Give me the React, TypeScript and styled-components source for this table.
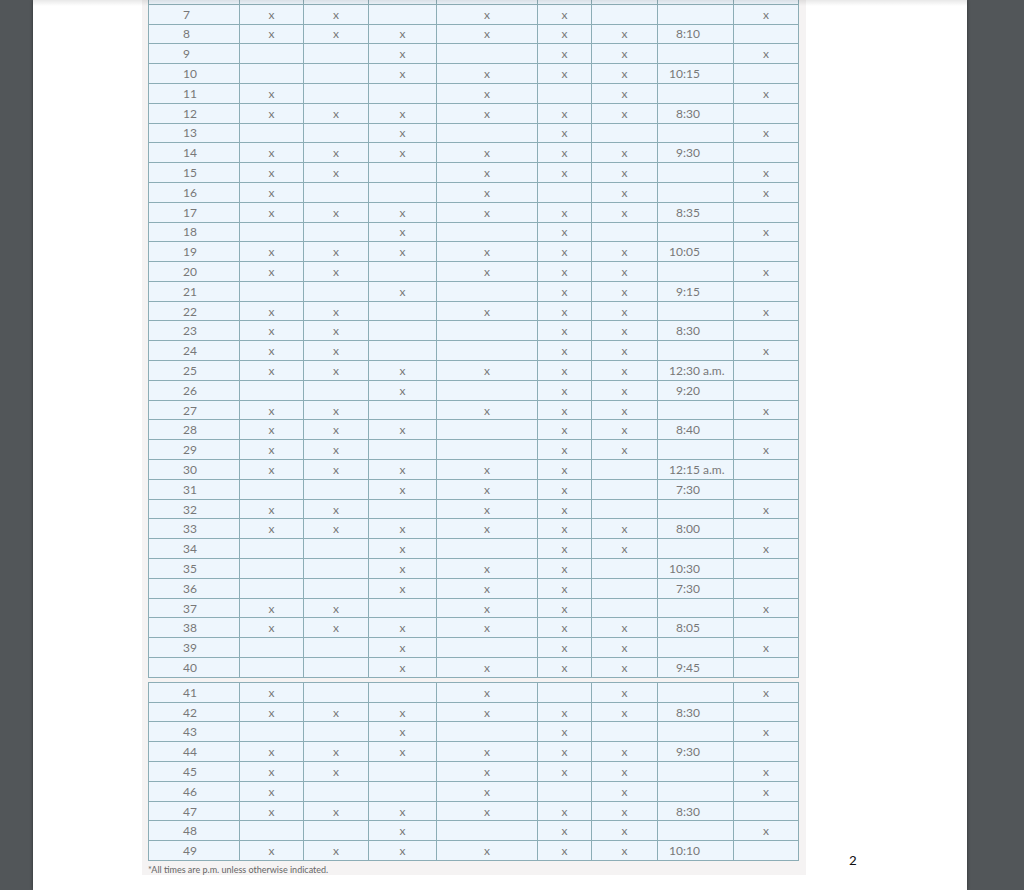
import React from 'react';
import styled, { createGlobalStyle } from 'styled-components';

const viewerGray = '#525659';
const lineColor = '#8cadb6';
const cellBlue = '#eef6fd';
const textGray = '#787878';

// c1..c6 marks, then time; the last column is marked when there's no time
type Entry = [number, string, string];

const firstBlock: Entry[] = [
  [6, '......', ''],
  [7, 'xx.xx.', ''],
  [8, 'xxxxxx', '8:10'],
  [9, '..x.xx', ''],
  [10, '..xxxx', '10:15'],
  [11, 'x..x.x', ''],
  [12, 'xxxxxx', '8:30'],
  [13, '..x.x.', ''],
  [14, 'xxxxxx', '9:30'],
  [15, 'xx.xxx', ''],
  [16, 'x..x.x', ''],
  [17, 'xxxxxx', '8:35'],
  [18, '..x.x.', ''],
  [19, 'xxxxxx', '10:05'],
  [20, 'xx.xxx', ''],
  [21, '..x.xx', '9:15'],
  [22, 'xx.xxx', ''],
  [23, 'xx..xx', '8:30'],
  [24, 'xx..xx', ''],
  [25, 'xxxxxx', '12:30 a.m.'],
  [26, '..x.xx', '9:20'],
  [27, 'xx.xxx', ''],
  [28, 'xxx.xx', '8:40'],
  [29, 'xx..xx', ''],
  [30, 'xxxxx.', '12:15 a.m.'],
  [31, '..xxx.', '7:30'],
  [32, 'xx.xx.', ''],
  [33, 'xxxxxx', '8:00'],
  [34, '..x.xx', ''],
  [35, '..xxx.', '10:30'],
  [36, '..xxx.', '7:30'],
  [37, 'xx.xx.', ''],
  [38, 'xxxxxx', '8:05'],
  [39, '..x.xx', ''],
  [40, '..xxxx', '9:45'],
];

const secondBlock: Entry[] = [
  [41, 'x..x.x', ''],
  [42, 'xxxxxx', '8:30'],
  [43, '..x.x.', ''],
  [44, 'xxxxxx', '9:30'],
  [45, 'xx.xxx', ''],
  [46, 'x..x.x', ''],
  [47, 'xxxxxx', '8:30'],
  [48, '..x.xx', ''],
  [49, 'xxxxxx', '10:10'],
];

const GlobalStyle = createGlobalStyle`
  html, body {
    margin: 0;
    padding: 0;
    height: 100%;
    background: ${viewerGray};
    overflow: hidden;
  }
`;

const Viewer = styled.div`
  height: 890px;
  padding-left: 33px;
  overflow: hidden;
`;

const Page = styled.div`
  position: relative;
  width: 934px;
  height: 890px;
  background: #ffffff;
  box-shadow: 0 0 3px rgba(0, 0, 0, 0.45);
  display: flex;
  align-items: flex-end;
  padding-left: 109px;
  padding-bottom: 15px;
  box-sizing: border-box;

  &::before {
    content: '';
    position: absolute;
    left: 0;
    right: 0;
    top: 0;
    height: 6px;
    background: linear-gradient(rgba(0, 0, 0, 0.09), rgba(0, 0, 0, 0));
    pointer-events: none;
  }
`;

const Scan = styled.div`
  background: #f5f3f3;
  padding: 0 7px 0 6px;
  overflow: hidden;
  height: 875px;
  display: flex;
  flex-direction: column;
  justify-content: flex-end;
`;

const Block = styled.div<{ $clipTop?: boolean }>`
  border-left: 1px solid ${lineColor};
  border-top: 1px solid ${lineColor};
  margin-top: ${(p) => (p.$clipTop ? '0' : '4px')};
`;

const Row = styled.div`
  display: grid;
  grid-template-columns: 91px 64px 65px 68px 101px 54px 66px 76px 65px;
  height: 19.8px;
`;

const Cell = styled.div<{ $align?: 'left' | 'center' }>`
  box-sizing: border-box;
  background: ${cellBlue};
  border-right: 1px solid ${lineColor};
  border-bottom: 1px solid ${lineColor};
  display: flex;
  align-items: center;
  justify-content: ${(p) => (p.$align === 'left' ? 'flex-start' : 'center')};
  font-family: Lato, 'Open Sans', sans-serif;
  font-size: 12px;
  color: ${textGray};
  white-space: nowrap;
`;

const NumberCell = styled(Cell)`
  padding-left: 34px;
`;

const TimeCell = styled(Cell)`
  padding-left: 11px;
`;

const Hour = styled.span`
  display: inline-block;
  width: 14px;
  text-align: right;
`;

const Footnote = styled.div`
  font-family: Lato, 'Open Sans', sans-serif;
  font-size: 9px;
  line-height: 11px;
  color: #666666;
  padding-top: 3px;
  height: 14px;
  box-sizing: border-box;
`;

const PageNumber = styled.div`
  margin-left: 43px;
  margin-bottom: 7px;
  font-family: Carlito, 'Liberation Sans', sans-serif;
  font-size: 15px;
  line-height: 15px;
  color: #111111;
`;

function Time({ value }: { value: string }) {
  if (!value) return null;
  const colon = value.indexOf(':');
  return (
    <>
      <Hour>{value.slice(0, colon)}</Hour>
      {value.slice(colon)}
    </>
  );
}

function ScheduleRow({ entry }: { entry: Entry }) {
  const [num, marks, time] = entry;
  return (
    <Row>
      <NumberCell $align="left">{num === 6 ? '' : num}</NumberCell>
      {marks.split('').map((m, i) => (
        <Cell key={i}>{m === 'x' ? 'x' : ''}</Cell>
      ))}
      <TimeCell $align="left">
        <Time value={time} />
      </TimeCell>
      <Cell>{time || num === 6 ? '' : 'x'}</Cell>
    </Row>
  );
}

export default function App() {
  return (
    <>
      <GlobalStyle />
      <Viewer>
        <Page>
          <Scan>
            <Block $clipTop>
              {firstBlock.map((e) => (
                <ScheduleRow key={e[0]} entry={e} />
              ))}
            </Block>
            <Block>
              {secondBlock.map((e) => (
                <ScheduleRow key={e[0]} entry={e} />
              ))}
            </Block>
            <Footnote>*All times are p.m. unless otherwise indicated.</Footnote>
          </Scan>
          <PageNumber>2</PageNumber>
        </Page>
      </Viewer>
    </>
  );
}
